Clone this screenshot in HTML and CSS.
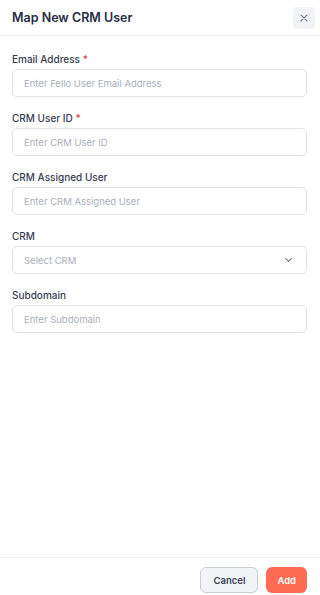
FILE: index.html
```html
<!DOCTYPE html>
<html lang="en">
<head>
  <meta charset="UTF-8">
  <meta name="viewport" content="width=device-width, initial-scale=1.0">
  <title>Map New CRM User</title>
  <link rel="stylesheet" href="styles.css">
</head>
<body>
  <div class="modal">
    <div class="modal-header">
      <h1>Map New CRM User</h1>
      <button type="button" class="close-button" aria-label="Close">
        <svg width="8" height="8" viewBox="0 0 8 8" fill="none" stroke="#7b8294" stroke-width="1.1" stroke-linecap="round">
          <path d="M1 1L7 7M7 1L1 7"/>
        </svg>
      </button>
    </div>

    <div class="modal-body">
      <div class="form-group">
        <label for="email">Email Address <span class="required">*</span></label>
        <input type="text" id="email" placeholder="Enter Fello User Email Address">
      </div>

      <div class="form-group">
        <label for="crm-user-id">CRM User ID <span class="required">*</span></label>
        <input type="text" id="crm-user-id" placeholder="Enter CRM User ID">
      </div>

      <div class="form-group">
        <label for="crm-assigned">CRM Assigned User</label>
        <input type="text" id="crm-assigned" placeholder="Enter CRM Assigned User">
      </div>

      <div class="form-group">
        <label>CRM</label>
        <div class="select">
          <span>Select CRM</span>
          <svg width="7" height="4" viewBox="0 0 7 4" fill="none" stroke="#6b7283" stroke-width="1.1" stroke-linecap="round" stroke-linejoin="round">
            <path d="M0.7 0.7L3.5 3.3L6.3 0.7"/>
          </svg>
        </div>
      </div>

      <div class="form-group">
        <label for="subdomain">Subdomain</label>
        <input type="text" id="subdomain" placeholder="Enter Subdomain">
      </div>
    </div>

    <div class="modal-footer">
      <button type="button" class="btn btn-cancel">Cancel</button>
      <button type="button" class="btn btn-add">Add</button>
    </div>
  </div>
</body>
</html>
```

FILE: styles.css
```css
body {
  font-family: Inter, "Noto Sans", sans-serif;
  margin: 0;
  background-color: white;
  color: #2a3048;
}

.modal {
  display: flex;
  flex-direction: column;
  height: 595px;
}

.modal-header {
  display: flex;
  align-items: center;
  justify-content: space-between;
  height: 35px;
  padding: 0 5px 0 12px;
  border-bottom: 1px solid #eef0f3;
}

h1 {
  margin: 0;
  font-size: 12.5px;
  font-weight: 600;
  color: #272d45;
}

.close-button {
  display: flex;
  align-items: center;
  justify-content: center;
  width: 22px;
  height: 22px;
  padding: 0;
  border: none;
  border-radius: 4px;
  background-color: #f2f3f6;
  cursor: pointer;
}

.modal-body {
  flex: 1;
  padding: 15px 13px 0 12px;
}

.form-group {
  margin-bottom: 13px;
}

label {
  display: block;
  margin-bottom: 2px;
  font-size: 10px;
  line-height: 16px;
  font-weight: 500;
  color: #363c50;
}

.required {
  color: #e8473b;
}

input,
.select {
  display: flex;
  align-items: center;
  width: 100%;
  height: 28px;
  padding: 0 11px;
  border: 1px solid #dfe2e8;
  border-radius: 5px;
  font-family: inherit;
  font-size: 9.5px;
  color: #2a3048;
  box-sizing: border-box;
}

input::placeholder {
  color: #a9afbb;
}

.select {
  justify-content: space-between;
  padding-right: 14px;
  color: #a9afbb;
}

.modal-footer {
  display: flex;
  justify-content: flex-end;
  gap: 8px;
  padding: 9px 13px 2px;
  border-top: 1px solid #eef0f3;
}

.btn {
  height: 26px;
  padding: 0 12px;
  border-radius: 6px;
  font-family: inherit;
  font-size: 9.5px;
  font-weight: 600;
  cursor: pointer;
}

.btn-cancel {
  background-color: #f3f4f7;
  border: 1px solid #c8cdd6;
  color: #3a4056;
}

.btn-add {
  padding: 0 11px;
  background-color: #ff6b55;
  border: none;
  color: white;
}
```
